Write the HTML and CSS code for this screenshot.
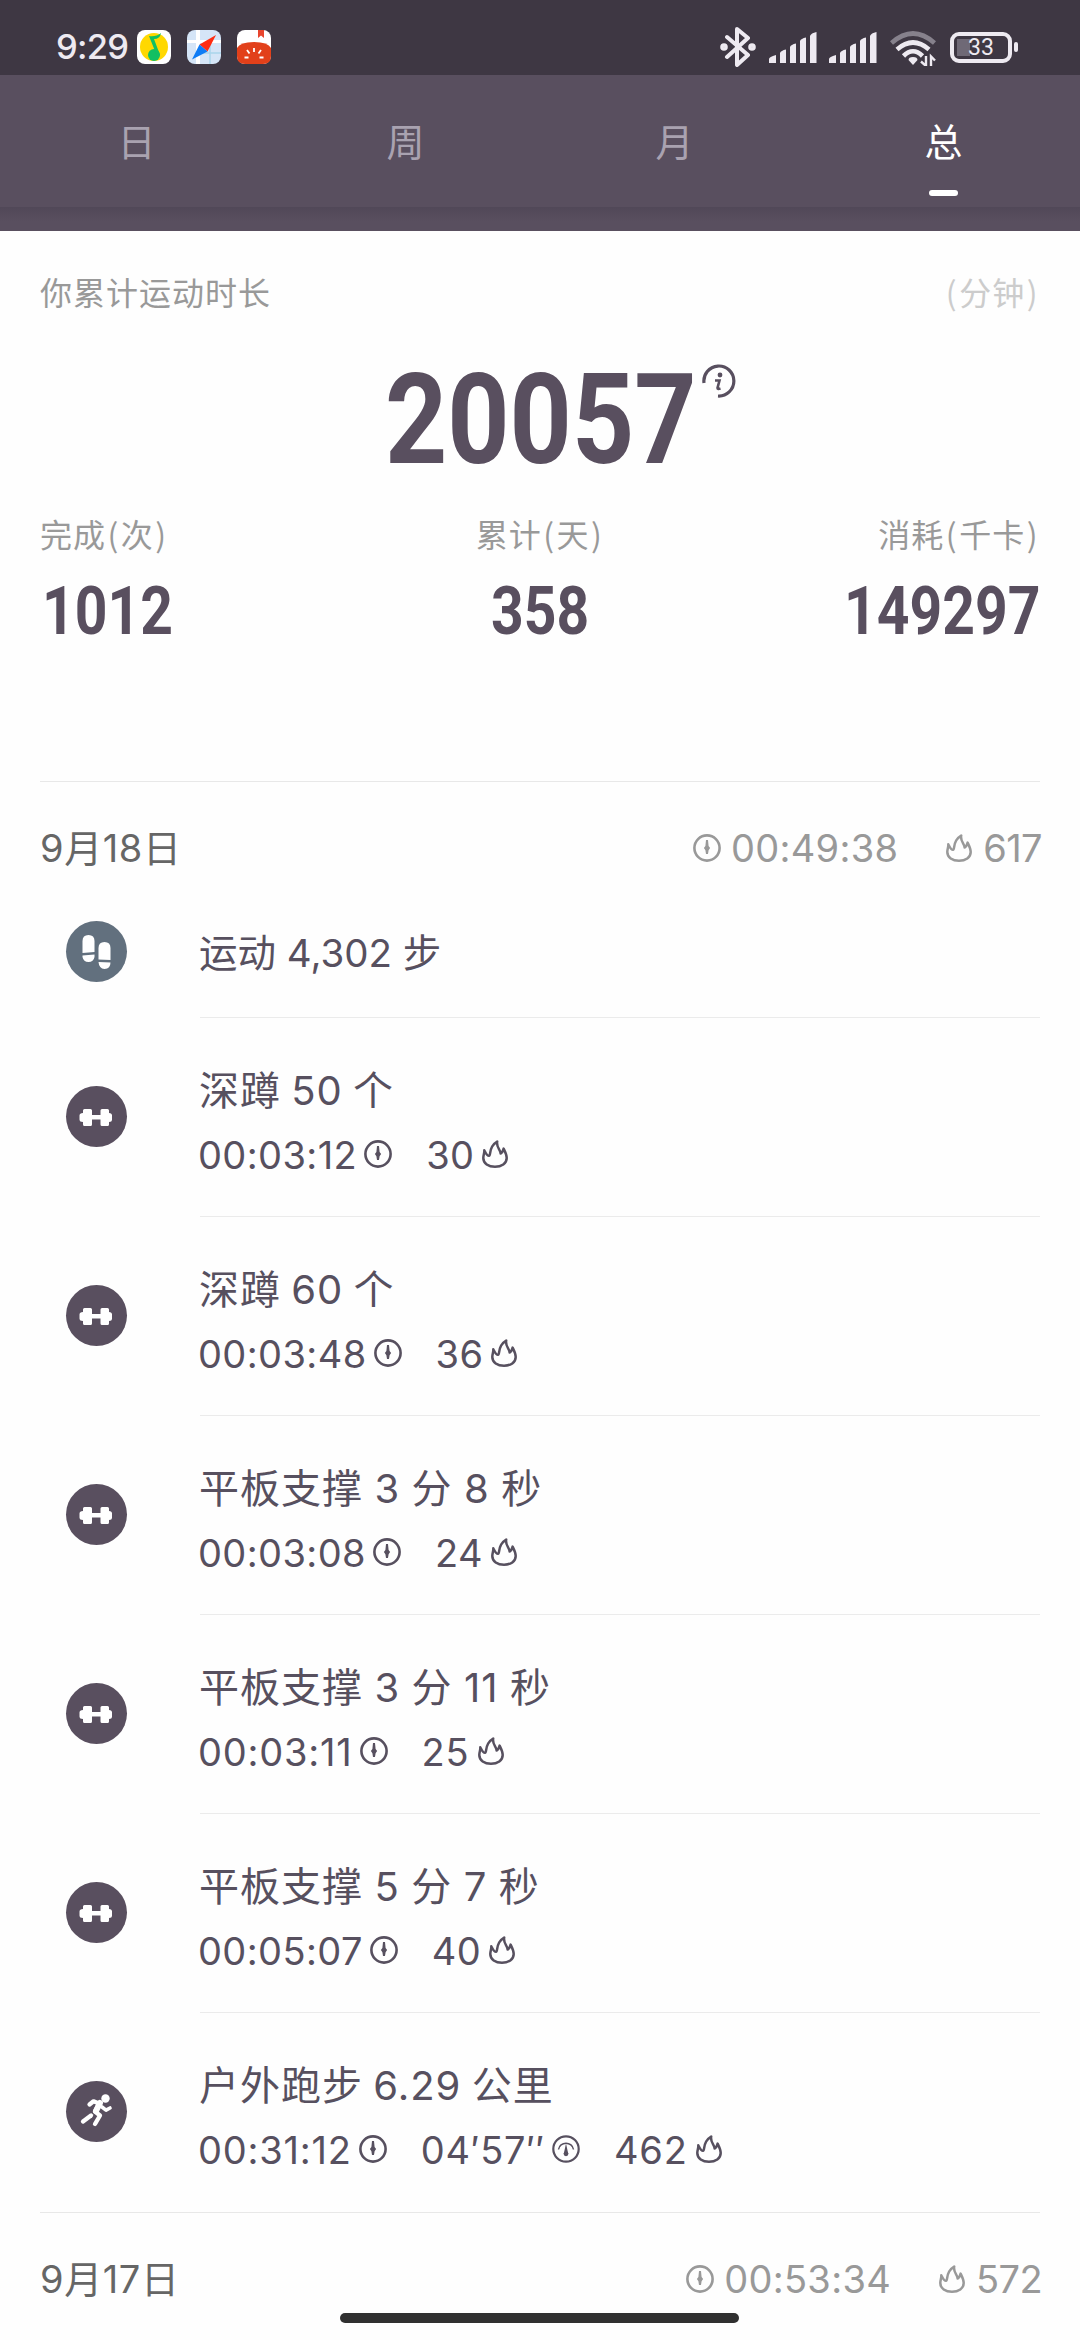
FILE: index.html
```html
<!DOCTYPE html>
<html lang="zh-CN">
<head>
<meta charset="utf-8">
<title>运动记录</title>
<link rel="stylesheet" href="styles.css">
</head>
<body>
<svg class="defs" aria-hidden="true">
  <symbol id="clock" viewBox="0 0 28 28"><circle cx="14" cy="14" r="12.600" fill="none" stroke="currentColor" stroke-width="2.600"/><path d="M13 6h2l.6 6 1.500 2-1.500 2.200L15 20h-2l-.6-3.800-1.500-2.200 1.500-2z" fill="currentColor"/></symbol>
  <symbol id="flame" viewBox="0 0 26 28"><path d="M2.300 10.300C3.500 12.500 5 16 7 15.800 9.300 15.500 6 7 15.200 1.500 14 7.500 18.600 9.500 18.600 13.600 20.600 12.600 21 10.500 21.600 8.600 23 11.500 24.700 14.500 24.700 18 24.700 23.500 19.500 26.700 13 26.700 6.500 26.700 1.300 23.500 1.300 18 1.300 15 2.600 13 2.300 10.300z" fill="none" stroke="currentColor" stroke-width="2.500" stroke-linejoin="round"/></symbol>
  <symbol id="pace" viewBox="0 0 28 28"><circle cx="14" cy="14" r="12.700" fill="none" stroke="currentColor" stroke-width="2.200"/><path d="M6.500 14.500A7.600 7.600 0 0 1 21.500 14.500" fill="none" stroke="currentColor" stroke-width="1.500"/><path d="M14 8.500l2.300 10.500h-4.600z" fill="currentColor"/><circle cx="14" cy="18.800" r="2.400" fill="currentColor"/></symbol>
  <symbol id="dumbbell" viewBox="0 0 61 61"><path d="M18.500 23h6q1.500 0 1.500 1.500v4.500h8.500V24.500q0-1.500 1.500-1.500h5.500q1.500 0 1.500 1.500v2.500q3 0 3 2.500v4q0 2.500-3 2.500v2.500q0 1.500-1.500 1.500H36q-1.500 0-1.500-1.500v-5H26v5q0 1.500-1.500 1.500h-6q-1.500 0-1.500-1.500v-2.500q-3.500 0-3.500-2.500v-4q0-2.500 3.500-2.500v-2.500q0-1.500 1.500-1.500z" fill="#fff"/></symbol>
  <symbol id="signal" viewBox="0 0 48 32"><path d="M0 31v-4q0-2 7-4v8zM11 31V21q1-2.500 6-3.500V31zM21 31V15q1-2.500 6-3.500V31zM31 31V9q1-2.500 6-3.500V31zM41 31V4q1-3 6.500-4v31z" fill="#eeeaf1"/></symbol>
</svg>

<header class="status">
  <span class="status-time">9:29</span>
  <svg class="app" viewBox="0 0 34 34"><rect width="34" height="34" rx="8" fill="#fff"/><circle cx="17" cy="17" r="14" fill="#ffd800"/><circle cx="17" cy="25" r="6" fill="#12bf62"/><path d="M12 6q7 1 12-3-1 6-7 6l6 16-3 1z" fill="#12bf62"/></svg>
  <svg class="app" viewBox="0 0 34 34"><rect width="34" height="34" rx="8" fill="#d5e5f7"/><path d="M9 0h4v10h21v3H13v21H9V13H0v-3h9z" fill="#fff"/><path d="M13 23h21M23 13v21" stroke="#a9d5ec" stroke-width="1.500"/><path d="M29 5L12.500 14.500l8 7z" fill="#ff2d12"/><path d="M5 29.500l7.500-15 8 7z" fill="#0f7cf5"/></svg>
  <svg class="app" viewBox="0 0 34 34"><rect width="34" height="34" rx="8" fill="#fff"/><path d="M0 18q3-6 17-6t17 6v8q0 8-8 8H8q-8 0-8-8z" fill="#e2401a"/><path d="M21 0h6v8l-3-2.500-3 2.500z" fill="#e8452e"/><path d="M17 18v4M10 20l2.500 3.500M24 20l-2.500 3.500M7.500 27.500h4M26.500 27.500h-4" stroke="#fff" stroke-width="1.800"/></svg>
  <svg class="bluetooth" viewBox="0 0 36 40" fill="none" stroke="#eeeaf1" stroke-width="4" stroke-linejoin="round" stroke-linecap="round"><path d="M7 10l21 18-11 10V2l11 9L7 30"/><circle cx="4" cy="20" r="1.800"/><circle cx="32" cy="20" r="1.800"/></svg>
  <svg class="signal"><use href="#signal"/></svg>
  <svg class="signal"><use href="#signal"/></svg>
  <svg class="wifi" viewBox="0 0 46 35" fill="none" stroke="#eeeaf1" stroke-width="4.600"><path d="M1.500 12Q23-7 44.500 12" stroke="#86818c"/><path d="M7 18.500Q23 4.500 39 18.500M13.500 25Q23 15.500 32.500 25"/><path d="M23 26q-4.500 0-4.500 3l4.500 5 4.500-5q0-3-4.500-3z" fill="#eeeaf1" stroke="none"/><path d="M36 25v10M31 30.500l5 4.500M41 35V25.500l4 4" stroke-width="2.400"/></svg>
  <span class="battery"><span class="battery-text">33</span></span>
</header>

<nav class="tabs">
  <span class="tab">日</span><span class="tab">周</span><span class="tab">月</span><span class="tab active">总</span>
</nav>
<div class="band"></div>

<main>
  <section class="summary">
    <div class="caption"><span>你累计运动时长</span><span class="unit"><i>(</i>分钟<i>)</i></span></div>
    <div class="total"><span class="total-num">20057</span>
      <svg class="info" viewBox="0 0 34 34" fill="none" stroke="#584f5f"><path d="M2 19A15 15 0 1 1 16 32" stroke-width="3.200"/><circle cx="18" cy="11" r="2.400" fill="#584f5f" stroke="none"/><path d="M13 16.500h4.500L15.500 24q0 1.500 3 .5" stroke-width="2.600"/></svg>
    </div>
    <div class="totals">
      <div class="cell"><span>完成<i>(</i>次<i>)</i></span><b>1012</b></div>
      <div class="cell mid"><span>累计<i>(</i>天<i>)</i></span><b>358</b></div>
      <div class="cell end"><span>消耗<i>(</i>千卡<i>)</i></span><b>149297</b></div>
    </div>
  </section>

  <section class="day">
    <div class="day-head"><span class="date">9月18日</span><svg class="ic"><use href="#clock"/></svg><span class="day-time">00:49:38</span><svg class="ic fl"><use href="#flame"/></svg><span class="kcal">617</span></div>
    <div class="item steps">
      <span class="badge slate"><svg viewBox="0 0 61 61" fill="#fff"><path d="M16.500 32V20q0-6 6-6t6 6v11zM16.500 34.500l12-1V36q-1 5-6 5t-6-5zM32.500 38.500V27q0-6 6-6t6 6v12zM32.500 41l12 .5q0 6-6 6.500-5.500-.5-6-7z"/></svg></span>
      <div class="body"><div class="title">运动 4,302 步</div></div>
    </div>
    <div class="item">
      <span class="badge"><svg><use href="#dumbbell"/></svg></span>
      <div class="body"><div class="title">深蹲 50 个</div><div class="stats"><span>00:03:12</span><svg class="ic"><use href="#clock"/></svg><span class="next">30</span><svg class="ic fl"><use href="#flame"/></svg></div></div>
    </div>
    <div class="item">
      <span class="badge"><svg><use href="#dumbbell"/></svg></span>
      <div class="body"><div class="title">深蹲 60 个</div><div class="stats"><span>00:03:48</span><svg class="ic"><use href="#clock"/></svg><span class="next">36</span><svg class="ic fl"><use href="#flame"/></svg></div></div>
    </div>
    <div class="item">
      <span class="badge"><svg><use href="#dumbbell"/></svg></span>
      <div class="body"><div class="title long">平板支撑 3 分 8 秒</div><div class="stats"><span>00:03:08</span><svg class="ic"><use href="#clock"/></svg><span class="next">24</span><svg class="ic fl"><use href="#flame"/></svg></div></div>
    </div>
    <div class="item">
      <span class="badge"><svg><use href="#dumbbell"/></svg></span>
      <div class="body"><div class="title long">平板支撑 3 分 11 秒</div><div class="stats wide"><span>00:03:11</span><svg class="ic"><use href="#clock"/></svg><span class="next">25</span><svg class="ic fl"><use href="#flame"/></svg></div></div>
    </div>
    <div class="item">
      <span class="badge"><svg><use href="#dumbbell"/></svg></span>
      <div class="body"><div class="title long">平板支撑 5 分 7 秒</div><div class="stats"><span>00:05:07</span><svg class="ic"><use href="#clock"/></svg><span class="next">40</span><svg class="ic fl"><use href="#flame"/></svg></div></div>
    </div>
    <div class="item last">
      <span class="badge"><svg viewBox="0 0 61 61" fill="none" stroke="#fff" stroke-linecap="round" stroke-linejoin="round"><circle cx="39.500" cy="17.500" r="4.200" fill="#fff" stroke="none"/><path d="M23.500 23.500l4-3.200 5.500 2.200-4 8 5 4-5 8.500" stroke-width="4.300"/><path d="M34 22l-4 8" stroke-width="6"/><path d="M36 26l4 3.200 4-2.200" stroke-width="3.600"/><path d="M25 34.500l-8 6" stroke-width="4.300"/></svg></span>
      <div class="body"><div class="title">户外跑步 6.29 公里</div><div class="stats wide"><span>00:31:12</span><svg class="ic"><use href="#clock"/></svg><span class="next">04′57′′</span><svg class="ic pc"><use href="#pace"/></svg><span class="next">462</span><svg class="ic fl"><use href="#flame"/></svg></div></div>
    </div>
  </section>
  <section class="day">
    <div class="day-head"><span class="date">9月17日</span><svg class="ic"><use href="#clock"/></svg><span class="day-time">00:53:34</span><svg class="ic fl"><use href="#flame"/></svg><span class="kcal">572</span></div>
  </section>
</main>
<div class="home-bar"></div>
</body>
</html>
```

FILE: styles.css
```css
* { box-sizing: border-box; }
body {
  margin: 0;
  width: 1080px;
  height: 2340px;
  overflow: hidden;
  position: relative;
  background: #fefefe;
  color: #57505f;
  font-family: Inter, "Noto Sans CJK SC", sans-serif;
}
svg { display: block; flex: none; }
.defs { position: absolute; width: 0; height: 0; }

.status {
  height: 75px;
  padding: 19px 60px 0 56px;
  display: flex;
  align-items: center;
  background: #3e3743;
}
.status-time { width: 81px; color: #eeeaf1; font-size: 34.500px; font-weight: 500; line-height: 56px; letter-spacing: -0.7px; }
.app { width: 34px; height: 34px; margin-right: 16px; }
.bluetooth { width: 36px; height: 40px; margin-left: auto; margin-right: 13px; }
.signal { width: 48px; height: 32px; margin: 2px 12px 0 0; }
.wifi { width: 46px; height: 35px; margin: 2px 15px 0 1px; }
.battery {
  position: relative;
  width: 62px;
  height: 31px;
  border: 4px solid #eeeaf1;
  border-radius: 9px;
  margin-right: 8px;
  margin-left: -1px;
  background: linear-gradient(#6f6976, #6f6976) 3px center / 13px 17px no-repeat;
}
.battery::after { content: ""; position: absolute; left: 60px; top: 6px; width: 4px; height: 10px; border-radius: 2px; background: #eeeaf1; }
.battery-text { display: block; text-align: center; color: #eeeaf1; font-family: Roboto, sans-serif; font-size: 23px; line-height: 24px; }

.tabs { display: grid; grid-template-columns: repeat(4, 1fr); height: 132px; padding: 0 2px; background: #594f5f; }
.tab { display: flex; flex-direction: column; align-items: center; padding-top: 39px; font-size: 38px; line-height: 56px; color: #a9a2b0; }
.tab.active { color: #fff; }
.tab.active::after { content: ""; width: 29px; height: 6px; margin-top: 20px; border-radius: 3px; background: #fff; }
.band { height: 24px; background: linear-gradient(#514858, #594f5f 60%); }

.summary { height: 550px; padding: 36px 40px 0; }
.summary i { font-style: normal; padding: 0 1.500px; }
.caption { display: flex; justify-content: space-between; line-height: 48px; font-family: "Noto Sans CJK SC", sans-serif; font-size: 32px; letter-spacing: 1px; color: #999; }
.unit { color: #ccc; }
.total { display: flex; height: 150px; margin-top: 27px; padding-left: 345px; }
.total-num { width: 315px; font: 700 127px/156px Roboto, sans-serif; transform: scaleX(0.855); transform-origin: left; color: #594f5f; }
.info { width: 34px; height: 34px; margin: 22px 0 0 2px; }
.totals { display: grid; grid-template-columns: repeat(3, 1fr); margin-top: 17px; }
.cell { display: flex; flex-direction: column; align-items: flex-start; }
.cell span { font-family: "Noto Sans CJK SC", sans-serif; font-size: 32px; line-height: 48px; letter-spacing: 1px; color: #999; }
.cell b { font: 700 67.500px/80px Roboto, sans-serif; margin: 14px 0 0 2px; transform: scaleX(0.845); transform-origin: left; color: #594f5f; }
.cell.mid { align-items: center; }
.cell.mid b { margin-left: 0; transform-origin: center; }
.cell.end { align-items: flex-end; }
.cell.end b { transform-origin: right; }

.day::before { content: ""; display: block; height: 1px; margin: 0 40px; background: #e8e8e8; }
.day-head { display: flex; align-items: center; height: 132px; padding: 0 38px 0 40px; font-size: 38px; line-height: 56px; color: #999; }
.date { margin-right: auto; color: #666; letter-spacing: 0.6px; }
.ic { width: 28px; height: 28px; margin-top: -1px; }
.ic.fl { width: 26px; }
.day-time { margin: 0 48px 0 10px; letter-spacing: 0.3px; }
.kcal { margin-left: 11px; letter-spacing: -0.6px; }

.item { display: flex; height: 199px; padding-left: 66px; }
.badge { width: 61px; height: 61px; margin-top: 68px; border-radius: 50%; background: #594f5f; }
.badge svg { width: 61px; height: 61px; }
.badge.slate { background: #62707e; margin-top: 7px; }
.body { flex: 1; margin: 0 40px 0 73px; padding-top: 48px; border-bottom: 1px solid #ebebeb; }
.title { height: 50px; margin-left: -1px; font-size: 40px; line-height: 50px; letter-spacing: 1px; word-spacing: -2px; white-space: nowrap; }
.title.long { word-spacing: -0.8px; }
.stats { display: flex; align-items: center; height: 50px; margin: 14px 0 0 -2px; font-size: 38px; line-height: 50px; letter-spacing: 0.4px; }
.stats .ic { margin-left: 7px; margin-top: -2px; }
.stats .fl { margin-left: 8px; }
.stats .next { margin-left: 34px; }
.stats.wide { letter-spacing: 0.8px; }
.steps { height: 104px; }
.steps .body { padding-top: 14px; }
.steps .title { font-size: 38.500px; letter-spacing: 0; word-spacing: 0; }
.last .body { border-bottom: 0; }

.home-bar { position: absolute; left: 340px; top: 2313px; width: 399px; height: 10px; border-radius: 5px; background: #303030; }
```
